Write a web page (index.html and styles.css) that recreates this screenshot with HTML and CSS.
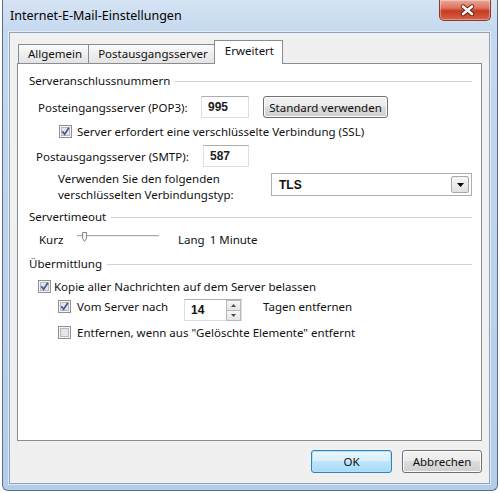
FILE: index.html
```html
<!DOCTYPE html>
<html lang="de">
<head>
    <meta charset="UTF-8">
    <title>Internet-E-Mail-Einstellungen</title>
    <link rel="stylesheet" href="styles.css">
</head>
<body>

    <div class="window">
        <div class="titlebar">
            <span class="title">Internet-E-Mail-Einstellungen</span>
            <button class="close" aria-label="Schließen">
                <svg width="52" height="20" viewBox="0 0 52 20">
                    <path d="M23 6.5l9 7.5M32 6.5l-9 7.5" stroke="#6b1d12" stroke-width="4.4" stroke-linecap="round"/>
                    <path d="M23 6.5l9 7.5M32 6.5l-9 7.5" stroke="#fff" stroke-width="2.6" stroke-linecap="round"/>
                </svg>
            </button>
        </div>

        <div class="client">
            <div class="tabs">
                <div class="tab">Allgemein</div>
                <div class="tab">Postausgangsserver</div>
                <div class="tab active">Erweitert</div>
            </div>

            <div class="panel">
                <div class="group">Serveranschlussnummern</div>

                <div class="row row-pop3">
                    <span class="lbl-pop3">Posteingangsserver (POP3):</span>
                    <input class="field port" type="text" value="995">
                    <button class="btn btn-std">Standard verwenden</button>
                </div>

                <div class="row row-ssl">
                    <svg class="cb" width="13" height="13" viewBox="0 0 13 13">
                        <rect x=".5" y=".5" width="12" height="12" fill="#f6f6f6" stroke="#8f8f8f"/>
                        <rect x="2.5" y="2.5" width="8" height="8" fill="#e3e6ea" stroke="#b4b9bf"/>
                        <path d="M3.3 6.3l2.3 2.9 4.3-6.4" fill="none" stroke="#45598c" stroke-width="1.7"/>
                    </svg>
                    <span>Server erfordert eine verschlüsselte Verbindung (SSL)</span>
                </div>

                <div class="row row-smtp">
                    <span class="lbl-smtp">Postausgangsserver (SMTP):</span>
                    <input class="field port port-smtp" type="text" value="587">
                </div>

                <div class="row row-conn">
                    <span class="lbl-conn">
                        <span>Verwenden Sie den folgenden</span>
                        <span>verschlüsselten Verbindungstyp:</span>
                    </span>
                    <div class="combo">
                        <span>TLS</span>
                        <span class="combo-btn">
                            <svg width="7" height="4" viewBox="0 0 7 4"><path d="M0 0h7l-3.5 4z" fill="#000"/></svg>
                        </span>
                    </div>
                </div>

                <div class="group group-timeout">Servertimeout</div>

                <div class="row row-timeout">
                    <span class="lbl-kurz">Kurz</span>
                    <svg class="slider" width="84" height="18" viewBox="0 0 84 18">
                        <path d="M1 5.5h82" stroke="#a9a9a9"/>
                        <path d="M1 6.5h82" stroke="#ececec"/>
                        <path d="M6.5 2.5h4v6l-2 3-2-3z" fill="#f2f2f2" stroke="#8a8a8a"/>
                    </svg>
                    <span class="lbl-lang">Lang</span>
                    <span class="timeout-val">1 Minute</span>
                </div>

                <div class="group group-gap">Übermittlung</div>

                <div class="row row-keep">
                    <svg class="cb" width="13" height="13" viewBox="0 0 13 13">
                        <rect x=".5" y=".5" width="12" height="12" fill="#f6f6f6" stroke="#8f8f8f"/>
                        <rect x="2.5" y="2.5" width="8" height="8" fill="#e3e6ea" stroke="#b4b9bf"/>
                        <path d="M3.3 6.3l2.3 2.9 4.3-6.4" fill="none" stroke="#45598c" stroke-width="1.7"/>
                    </svg>
                    <span>Kopie aller Nachrichten auf dem Server belassen</span>
                </div>

                <div class="row row-days">
                    <svg class="cb" width="13" height="13" viewBox="0 0 13 13">
                        <rect x=".5" y=".5" width="12" height="12" fill="#f6f6f6" stroke="#8f8f8f"/>
                        <rect x="2.5" y="2.5" width="8" height="8" fill="#e3e6ea" stroke="#b4b9bf"/>
                        <path d="M3.3 6.3l2.3 2.9 4.3-6.4" fill="none" stroke="#45598c" stroke-width="1.7"/>
                    </svg>
                    <span class="lbl-days">Vom Server nach</span>
                    <div class="field spinner">
                        <span class="spin-val">14</span>
                        <span class="spin-btns">
                            <span class="spin-btn">
                                <svg width="5" height="3" viewBox="0 0 5 3"><path d="M0 3h5L2.5 0z" fill="#4d4d4d"/></svg>
                            </span>
                            <span class="spin-btn">
                                <svg width="5" height="3" viewBox="0 0 5 3"><path d="M0 0h5L2.5 3z" fill="#4d4d4d"/></svg>
                            </span>
                        </span>
                    </div>
                    <span class="lbl-tagen">Tagen entfernen</span>
                </div>

                <div class="row row-delete">
                    <svg class="cb" width="13" height="13" viewBox="0 0 13 13">
                        <rect x=".5" y=".5" width="12" height="12" fill="#f6f6f6" stroke="#8f8f8f"/>
                        <rect x="2.5" y="2.5" width="8" height="8" fill="#e3e6ea" stroke="#b4b9bf"/>
                    </svg>
                    <span>Entfernen, wenn aus "Gelöschte Elemente" entfernt</span>
                </div>
            </div>

            <div class="footer">
                <button class="btn btn-ok">OK</button>
                <button class="btn btn-cancel">Abbrechen</button>
            </div>
        </div>
    </div>

</body>
</html>
```

FILE: styles.css
```css
* {
    box-sizing: border-box;
}

body {
    margin: 0;
    background-color: #fff;
    font-family: "Noto Sans", sans-serif;
    font-size: 11.5px;
    color: #111;
}

/* window frame */
.window {
    width: 496px;
    height: 491px;
    margin-left: 2px;
    border: 1px solid #5b6d84;
    border-top: none;
    border-radius: 0 0 6px 6px;
    background: linear-gradient(to bottom, #d5e3f3 0, #c4d8ee 32px, #b3cdea 100%);
    padding: 0 7px 6px 6px;
    display: flex;
    flex-direction: column;
}

.titlebar {
    height: 32px;
    display: flex;
    align-items: flex-start;
}

.title {
    line-height: 32px;
    padding-left: 1px;
    font-size: 12.5px;
    color: #000;
}

.close {
    margin-left: auto;
    margin-right: -1px;
    width: 52px;
    height: 21px;
    padding: 0;
    border: 1px solid #8a3a2c;
    border-top: none;
    border-radius: 0 0 5px 5px;
    background: linear-gradient(to bottom, #eba798 0, #dd735d 40%, #c63b20 55%, #d5634a 100%);
    box-shadow: inset 0 0 0 1px rgba(255, 255, 255, 0.35);
}

.close svg {
    display: block;
}

/* client area */
.client {
    flex: 1;
    background-color: #f0f0f0;
    border: 1px solid #8fa3bb;
    box-shadow: 0 0 0 1px rgba(255, 255, 255, 0.55);
    padding: 7px 7px 0 7px;
    display: flex;
    flex-direction: column;
}

.tabs {
    display: flex;
    align-items: flex-end;
    height: 23px;
    padding-left: 1px;
}

.tab {
    height: 19px;
    line-height: 18px;
    padding: 0 6px 0 9px;
    border: 1px solid #898c95;
    border-bottom: none;
    background: linear-gradient(to bottom, #fcfcfc, #eeeeee 50%, #e3e3e3);
    margin-right: -1px;
    white-space: nowrap;
}

.tab.active {
    height: 24px;
    margin-bottom: -1px;
    padding: 1px 8px 0 10px;
    background: #fff;
    position: relative;
    z-index: 1;
}

.panel {
    height: 378px;
    border: 1px solid #898c95;
    background-color: #fff;
    padding: 9px 9px 0 11px;
}

/* group box headers */
.group {
    display: flex;
    align-items: center;
    gap: 5px;
    height: 16px;
    line-height: 16px;
    white-space: nowrap;
}

.group::after {
    content: "";
    flex: 1;
    border-top: 1px solid #cdd4da;
}

.group-gap {
    margin-top: 8px;
}

.row {
    display: flex;
    align-items: center;
    white-space: nowrap;
}

.cb {
    display: block;
    flex: none;
}

/* ports */
.row-pop3 {
    margin-top: 7px;
    margin-left: 9px;
    height: 22px;
}

.lbl-pop3 {
    width: 163px;
}

.field {
    height: 22px;
    border: 1px solid #dbdfe6;
    border-top-color: #abadb3;
    background-color: #fff;
}

.port {
    width: 48px;
    padding: 0 0 0 6px;
    font: bold 12px "Liberation Sans", Arial, sans-serif;
    color: #222;
    outline: none;
}

.port-smtp {
    width: 46px;
}

.btn {
    font: inherit;
    color: #111;
    padding: 0;
    border: 1px solid #707070;
    border-radius: 3px;
    background: linear-gradient(to bottom, #f2f2f2 0, #ebebeb 45%, #dddddd 50%, #cfcfcf 100%);
    box-shadow: inset 0 0 0 1px #fcfcfc;
}

.btn-std {
    margin-left: 14px;
    width: 125px;
    height: 22px;
}

.row-ssl {
    margin-top: 2px;
    margin-left: 30px;
    height: 22px;
    gap: 5px;
}

.row-smtp {
    margin-top: 3px;
    margin-left: 7px;
    height: 22px;
}

.lbl-smtp {
    width: 167px;
}

/* connection type */
.row-conn {
    margin-top: 4px;
    margin-left: 29px;
    align-items: flex-start;
}

.lbl-conn {
    width: 213px;
}

.lbl-conn span {
    display: block;
    line-height: 16px;
}

.combo {
    margin-top: 2px;
    width: 201px;
    height: 23px;
    border: 1px solid #abadb3;
    background-color: #fff;
    display: flex;
    align-items: center;
    padding: 0 2px 0 7px;
    font: bold 12px "Liberation Sans", Arial, sans-serif;
}

.combo-btn {
    margin-left: auto;
    width: 18px;
    height: 17px;
    border: 1px solid #a8a8a8;
    border-radius: 2px;
    background: linear-gradient(to bottom, #f6f6f6, #e2e2e2);
    display: flex;
    align-items: center;
    justify-content: center;
}

.combo-btn svg {
    display: block;
}

/* timeout slider */
.group-timeout {
    margin-top: 6px;
}

.row-timeout {
    margin-top: 5px;
    margin-left: 10px;
    height: 18px;
}

.lbl-kurz {
    width: 37px;
}

.slider {
    display: block;
}

.lbl-lang {
    margin-left: 18px;
}

.timeout-val {
    margin-left: 5px;
}

/* delivery */
.row-keep {
    margin-top: 6px;
    margin-left: 9px;
    height: 16px;
    gap: 3px;
}

.row-days {
    margin-top: 5px;
    margin-left: 29px;
    height: 22px;
    align-items: flex-start;
    gap: 6px;
}

.row-days .cb {
    margin-top: 1px;
}

.row-days span {
    line-height: 16px;
}

.lbl-days {
    width: 101px;
}

.spinner {
    width: 58px;
    display: flex;
    align-items: stretch;
}

.spin-val {
    flex: 1;
    padding-left: 6px;
    font: bold 12px "Liberation Sans", Arial, sans-serif;
    line-height: 20px !important;
}

.spin-btns {
    width: 15px;
    display: flex;
    flex-direction: column;
}

.spin-btn {
    flex: 1;
    border: 1px solid #b6b9be;
    margin-bottom: -1px;
    background: linear-gradient(to bottom, #f7f7f7, #e4e4e4);
    display: flex;
    align-items: center;
    justify-content: center;
}

.spin-btn svg {
    display: block;
}

.lbl-tagen {
    margin-left: 15px;
}

.row-delete {
    margin-top: 3px;
    margin-left: 29px;
    height: 16px;
    gap: 6px;
}

/* dialog buttons */
.footer {
    display: flex;
    justify-content: flex-end;
    gap: 10px;
    padding-top: 9px;
}

.footer .btn {
    height: 23px;
}

.btn-ok {
    width: 81px;
    border-color: #3c7fb1;
    background: linear-gradient(to bottom, #eaf6fd 0, #d9f0fc 45%, #bee6fd 50%, #a7d9f5 100%);
    box-shadow: inset 0 0 0 1px #a9e4f8;
}

.btn-cancel {
    width: 80px;
}
```
